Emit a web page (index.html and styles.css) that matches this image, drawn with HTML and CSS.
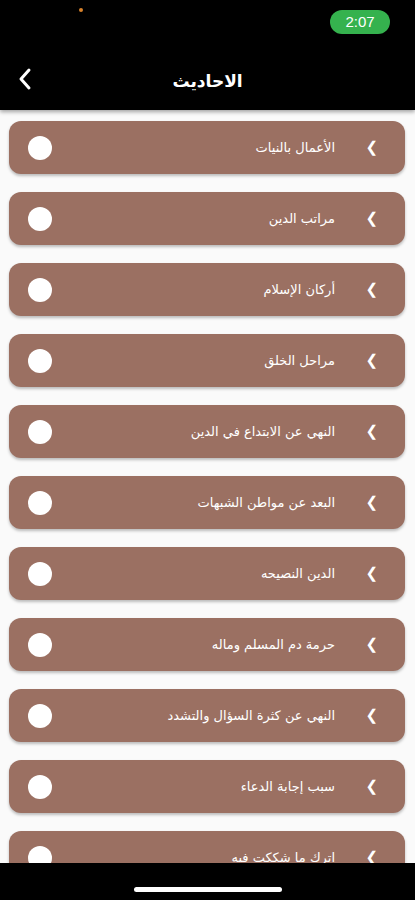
FILE: index.html
```html
<!DOCTYPE html>
<html lang="ar" dir="rtl">
<head>
  <meta charset="UTF-8">
  <meta name="viewport" content="width=device-width, initial-scale=1.0">
  <title>الاحاديث</title>
  <link rel="stylesheet" href="styles.css">
</head>
<body>
    <div class="phone">
        <div class="header">
            <div class="status-bar">
                <span class="clock">2:07</span>
                <span class="dot"></span>
            </div>
            <div class="nav-bar">
                <span class="title">الاحاديث</span>
                <svg class="back" width="16" height="24" viewBox="0 0 16 24">
                    <path d="M12 3 L4 12 L12 21" fill="none" stroke="#fff" stroke-width="3" stroke-linecap="round" stroke-linejoin="round"/>
                </svg>
            </div>
        </div>
        <div class="list">
            <div class="item"><span class="arrow">&#10095;</span><span class="name">الأعمال بالنيات</span><span class="circle"></span></div>
            <div class="item"><span class="arrow">&#10095;</span><span class="name">مراتب الدين</span><span class="circle"></span></div>
            <div class="item"><span class="arrow">&#10095;</span><span class="name">أركان الإسلام</span><span class="circle"></span></div>
            <div class="item"><span class="arrow">&#10095;</span><span class="name">مراحل الخلق</span><span class="circle"></span></div>
            <div class="item"><span class="arrow">&#10095;</span><span class="name">النهي عن الابتداع في الدين</span><span class="circle"></span></div>
            <div class="item"><span class="arrow">&#10095;</span><span class="name">البعد عن مواطن الشبهات</span><span class="circle"></span></div>
            <div class="item"><span class="arrow">&#10095;</span><span class="name">الدين النصيحه</span><span class="circle"></span></div>
            <div class="item"><span class="arrow">&#10095;</span><span class="name">حرمة دم المسلم وماله</span><span class="circle"></span></div>
            <div class="item"><span class="arrow">&#10095;</span><span class="name">النهي عن كثرة السؤال والتشدد</span><span class="circle"></span></div>
            <div class="item"><span class="arrow">&#10095;</span><span class="name">سبب إجابة الدعاء</span><span class="circle"></span></div>
            <div class="item"><span class="arrow">&#10095;</span><span class="name">اترك ما شككت فيه</span><span class="circle"></span></div>
        </div>
        <div class="home-bar">
            <span class="indicator"></span>
        </div>
    </div>
</body>
</html>
```
FILE: styles.css
```css
body {
    margin: 0;
    background-color: #000;
    font-family: "DejaVu Sans", sans-serif;
}
.phone {
    width: 415px;
    height: 900px;
    display: flex;
    flex-direction: column;
    overflow: hidden;
    background-color: #fafafa;
}
.header {
    height: 110px;
    background-color: #000;
    box-shadow: 0 2px 4px rgba(0, 0, 0, 0.35);
    position: relative;
    z-index: 1;
}
.status-bar {
    height: 55px;
    display: flex;
    align-items: flex-start;
    justify-content: space-between;
    padding: 10px 25px 0 0;
    box-sizing: border-box;
}
.clock {
    width: 60px;
    height: 24px;
    border-radius: 12px;
    background-color: #35b24e;
    color: #fff;
    font-family: "Liberation Sans", sans-serif;
    font-size: 15px;
    line-height: 24px;
    text-align: center;
}
.dot {
    width: 4px;
    height: 4px;
    border-radius: 50%;
    background-color: #d9822b;
    margin: -2px 0 0 0;
    margin-left: 79px;
}
.nav-bar {
    height: 55px;
    display: flex;
    align-items: center;
    justify-content: center;
    position: relative;
    padding-bottom: 3px;
    box-sizing: border-box;
}
.title {
    color: #fff;
    font-size: 17px;
    font-weight: bold;
}
.back {
    position: absolute;
    left: 17px;
    top: 12px;
}
.list {
    flex: 1;
    overflow: hidden;
    padding: 11px 10px 0 9px;
    display: flex;
    flex-direction: column;
    gap: 18px;
}
.item {
    flex-shrink: 0;
    height: 53px;
    border-radius: 12px;
    background-color: #9b7062;
    box-shadow: 0 2px 3px rgba(0, 0, 0, 0.25);
    display: flex;
    align-items: center;
    padding: 0 27px 0 19px;
    color: #fff;
}
.arrow {
    font-family: "DejaVu Sans", sans-serif;
    font-size: 15px;
    line-height: 1;
    width: 12px;
    text-align: center;
    margin-left: 31px;
}
.name {
    flex: 1;
    font-size: 13px;
}
.circle {
    width: 24px;
    height: 24px;
    border-radius: 50%;
    background-color: #fff;
}
.home-bar {
    height: 37px;
    background-color: #000;
    display: flex;
    justify-content: center;
    align-items: flex-end;
    padding-bottom: 8px;
    box-sizing: border-box;
}
.indicator {
    width: 148px;
    height: 5px;
    border-radius: 3px;
    background-color: #fff;
}
```
